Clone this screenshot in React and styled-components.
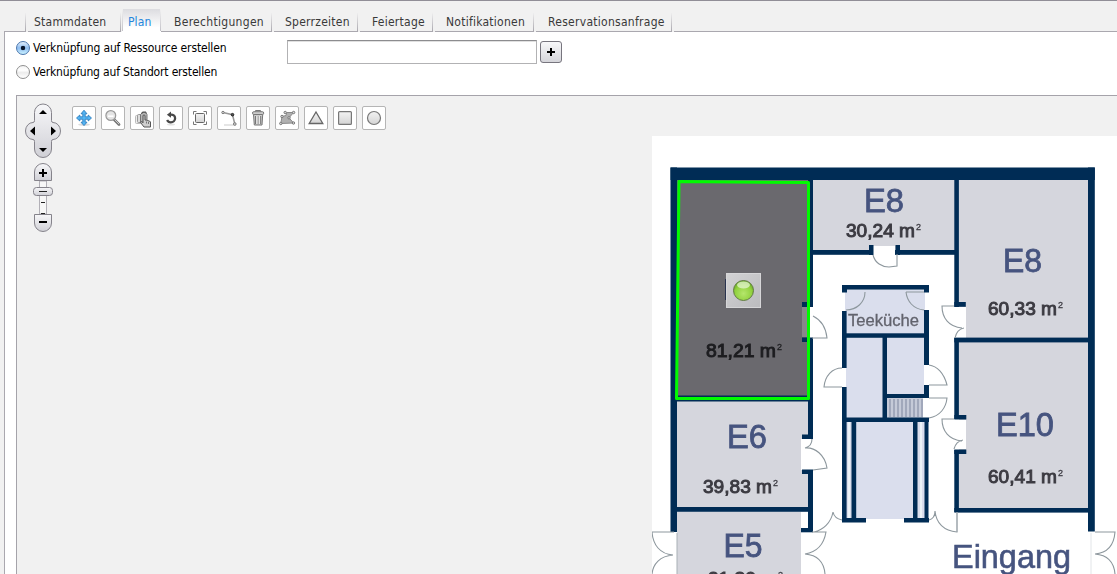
import React from "react";
import styled, { createGlobalStyle } from "styled-components";

const Global = createGlobalStyle`
  * { box-sizing: border-box; }
  html, body { margin: 0; height: 100%; overflow: hidden; background: #f1f1f1; }
  body { font-family: "DejaVu Sans Condensed", "DejaVu Sans", sans-serif; font-stretch: condensed; font-size: 12px; color: #000; }
`;

const Page = styled.div`
  width: 1117px;
  height: 574px;
  overflow: hidden;
  border-top: 1px solid #918e97;
  display: flex;
  flex-direction: column;
`;

const TabBar = styled.nav`
  display: flex;
  flex: none;
  gap: 2px;
  height: 31px;
  padding: 8px 0 0 4px;
`;

const TabEdge = styled.div`
  width: ${(p) => (p.$grow ? "auto" : "22px")};
  flex: ${(p) => (p.$grow ? 1 : "none")};
  border-bottom: 1px solid #aaa8af;
  background: ${(p) => (p.$grow ? "none" : "linear-gradient(#f1f1f1 15%, #aaa8af) right / 1px 100% no-repeat")};
`;

const Tab = styled.button`
  flex: none;
  width: ${(p) => p.$width}px;
  height: 23px;
  margin: 0 ${(p) => (p.$active ? "-2px" : 0)} 0 ${(p) => (p.$active ? "-1px" : 0)};
  padding: 3px 0 0 ${(p) => p.$pad}px;
  border: 0;
  border-bottom: 1px solid ${(p) => (p.$active ? "#fff" : "#aaa8af")};
  background: ${(p) =>
    p.$active
      ? "linear-gradient(#f1f1f1, #c4c3c9) left / 1px 100% no-repeat, linear-gradient(#f1f1f1, #c4c3c9) right / 1px 100% no-repeat, linear-gradient(#dcdce0, #fff 85%)"
      : "linear-gradient(#f1f1f1 15%, #aaa8af) right / 1px 100% no-repeat"};
  color: ${(p) => (p.$active ? "#2486dc" : "#393939")};
  font: inherit;
  line-height: 20px;
  letter-spacing: ${(p) => p.$track}px;
  text-align: left;
  white-space: nowrap;
`;

const Panel = styled.main`
  flex: 1;
  min-height: 0;
  margin-left: 4px;
  border-left: 1px solid #aaa8af;
  background: #fff;
  display: flex;
  flex-direction: column;
`;

const LinkForm = styled.div`
  display: flex;
  flex: none;
  height: 63px;
  padding: 8px 0 0 11px;
`;

const Choices = styled.div`
  width: 271px;
  display: flex;
  flex-direction: column;
  gap: 8px;
`;

const Choice = styled.label`
  display: flex;
  align-items: center;
  gap: 3px;
  height: 16px;
  white-space: nowrap;
  letter-spacing: ${(p) => p.$track}px;
`;

const Radio = styled.span`
  width: 14px;
  height: 14px;
  flex: none;
  border-radius: 50%;
  border: 1px solid ${(p) => (p.$on ? "#4a76ad" : "#8f8f8f")};
  background: ${(p) =>
    p.$on
      ? "radial-gradient(circle, #08152c 0 1.9px, transparent 2.6px), linear-gradient(#e2eefb, #8fbdf0 50%, #c9f1ff)"
      : "linear-gradient(#f4f4f4, #fff 35%, #ececec 55%, #fff)"};
`;

const Input = styled.input`
  width: 250px;
  height: 24px;
  border: 1px solid #b2b2b4;
  border-top-color: #8c8c8f;
  box-shadow: inset 0 1px 0 #e0e0e0;
  background: #fff;
  outline: 0;
`;

const AddButton = styled.button`
  width: 22px;
  height: 22px;
  margin: 1px 0 0 3px;
  padding: 0;
  border: 1px solid #77757e;
  border-radius: 3px;
  background: linear-gradient(#f8f8fa, #d5d5da);
  display: grid;
  place-items: center;
`;

const MapArea = styled.section`
  flex: 1;
  min-height: 0;
  margin-left: 11px;
  border-top: 1px solid #a5a3aa;
  border-left: 1px solid #a5a3aa;
  background: #f1f1f1;
  display: flex;
`;

const Navigation = styled.div`
  width: 55px;
  flex: none;
  padding: 7px 0 0 7px;
`;

const Tools = styled.div`
  width: 580px;
  flex: none;
  padding-top: 10px;
  display: flex;
  align-items: flex-start;
  gap: 5px;
`;

const Tool = styled.button`
  width: 24px;
  height: 24px;
  padding: 0;
  border: 1px solid #b5b5b5;
  border-radius: 2px;
  background: #fff;
  display: grid;
  place-items: center;
`;

const Plan = styled.div`
  flex: none;
  width: 465px;
  height: 438px;
  margin-top: 40px;
  background: #fff;
`;

const Drawing = styled.svg`
  display: block;
  overflow: hidden;
  font-family: "Liberation Sans", Arial, sans-serif;
`;

const tabs = [
  { label: "Stammdaten", width: 93, pad: 6, track: 0.25 },
  { label: "Plan", width: 39, pad: 6, track: 0.1, active: true },
  { label: "Berechtigungen", width: 111, pad: 13, track: 0.3 },
  { label: "Sperrzeiten", width: 84, pad: 11, track: 0.25 },
  { label: "Feiertage", width: 73, pad: 12, track: 0.25 },
  { label: "Notifikationen", width: 99, pad: 11, track: 0.25 },
  { label: "Reservationsanfrage", width: 136, pad: 12, track: 0.28 },
];

const node = { fill: "#ddd", stroke: "#777", strokeWidth: 1 };

const icons = {
  move: (
    <>
      <ellipse cx="11" cy="17.6" rx="6" ry="1.3" fill="#ddd" />
      <path d="M11 3.2l3 3.6h-1.8v3h3V8l3.3 3-3.3 3v-1.8h-3v3H14l-3 3.4-3-3.4h1.8v-3h-3V14l-3.3-3 3.3-3v1.8h3v-3H8z" fill="#54b5f3" stroke="#2274b8" strokeWidth=".8" />
    </>
  ),
  zoom: (
    <>
      <path d="M11.8 12.2l5.2 5.2" stroke="#777" strokeWidth="2.8" strokeLinecap="round" />
      <path d="M12.5 12.5l4.6 4.6" stroke="#ccc" strokeWidth="1" />
      <circle cx="8.8" cy="8.5" r="4.9" fill="#e4e4e4" stroke="#999" strokeWidth="1.2" />
      <path d="M6 9.200h5.500" fill="none" stroke="#fff" strokeWidth="1.6" />
    </>
  ),
  hand: (
    <>
      <rect x="4.500" y="8.500" width="6" height="8" rx="1" fill="#eee" stroke="#bbb" />
      <rect x="6.500" y="7.500" width="6" height="8" rx="1" fill="#ddd" stroke="#999" />
      <path d="M9.500 7.500l2-2h3l1.500 2v7.500h-6.500z" fill="#b8b8b8" stroke="#777" />
      <path d="M10.500 6.500l1.500-1.500h2.500l1 1.500" fill="none" stroke="#555" strokeWidth="1.200" />
      <path d="M12 9c0-1.600 2-1.600 2 0v4l1.300.1 1.400.5 1.400.4 1.400.8v5.200h-6.500l-3.300-4.300c0-1.400 1.200-1.300 2.300.2z" fill="#cfcfcf" stroke="#555" />
      <path d="M15.500 14.500v2M17.500 15v2" stroke="#777" />
    </>
  ),
  undo: (
    <>
      <ellipse cx="11" cy="17.5" rx="4" ry="1" fill="#e2e2e2" />
      <path d="M10.2 7.7c3-.5 4.9 1.300 4.900 3.500 0 2.500-2 4.100-4.300 4.100-1.800 0-3-.8-3.700-2.200" fill="none" stroke="#484848" strokeWidth="2.300" />
      <path d="M11 4.600v6.200L6.900 7.800z" fill="#484848" />
    </>
  ),
  frame: (
    <>
      <rect x="6.5" y="6.5" width="9" height="9" rx="1" fill="url(#shade)" stroke="#666" />
      <path d="M4.5 7.5v-3h3M14.5 4.5h3v3M17.5 14.5v3h-3M7.5 17.5h-3v-3" fill="none" stroke="#777" />
    </>
  ),
  line: (
    <>
      <path d="M6 18h12" stroke="#e5e5e5" strokeWidth="2" />
      <path d="M5 5.5l9.5 2.2L16.8 17" fill="none" stroke="#999" strokeWidth="1.5" />
      <circle cx="5" cy="5.5" r="1.2" {...node} />
      <circle cx="14.5" cy="7.7" r="1.3" fill="#555" stroke="#222" />
      <circle cx="16.8" cy="17" r="1.3" {...node} />
    </>
  ),
  trash: (
    <>
      <path d="M6.5 7.5h9.2L15 18H7.3z" fill="#ccc" stroke="#777" />
      <path d="M8.5 9v8M11 9v8M13.7 9v8" stroke="#777" />
      <path d="M10 9v8M12.3 9v8" stroke="#eee" />
      <path d="M8.5 4.5v-1h5v1" fill="none" stroke="#777" />
      <rect x="5.5" y="4.7" width="11.2" height="2.8" rx="1.3" fill="#ccc" stroke="#777" />
    </>
  ),
  polygon: (
    <>
      <path d="M4.800 16.500L6 9.500l4-1 .8-3h6.800L13 10.800l4.600 5.200z" fill="#b0b0b0" stroke="#8a8a8a" />
      <circle cx="4.8" cy="16.5" r="1.2" {...node} />
      <circle cx="6" cy="9.5" r="1.2" {...node} />
      <circle cx="9.2" cy="5.5" r="1.2" {...node} />
      <circle cx="17.6" cy="5.5" r="1.2" {...node} />
      <circle cx="13" cy="10.8" r="1.2" {...node} />
      <circle cx="17.5" cy="16" r="1.2" {...node} />
    </>
  ),
  triangle: <path d="M11 5l6.8 11.5H4.2z" fill="url(#shade)" stroke="#666" strokeWidth="1.3" />,
  square: <rect x="4.6" y="4.6" width="12.8" height="12.8" rx="1" fill="url(#shade)" stroke="#777" strokeWidth="1.2" />,
  circle: <circle cx="11" cy="11" r="6.5" fill="url(#shade)" stroke="#777" strokeWidth="1.2" />,
};

function Controls() {
  return (
    <svg width="38" height="130" viewBox="24 103 38 130" style={{ display: "block" }}>
      <defs>
        <linearGradient id="metal" x1="0" y1="0" x2="0" y2="1">
          <stop offset="0" stopColor="#f7f7f9" />
          <stop offset="1" stopColor="#d0d0d6" />
        </linearGradient>
        <linearGradient id="shade" x1="0" y1="0" x2="0" y2="1">
          <stop offset="0" stopColor="#f3f3f3" />
          <stop offset="1" stopColor="#d4d4d4" />
        </linearGradient>
      </defs>
      <g fill="url(#metal)" stroke="#85838b">
        <path d="M34.5 112.5a8.5 8.5 0 0 1 17 0v8q0 2 1.500 2a7.500 8.500 0 0 1 0 17q-1.500 0-1.500 2v7.500a8.500 8.500 0 0 1-17 0v-7.500q0-2-1.500-2a7.500 8.500 0 0 1 0-17q1.500 0 1.500-2z" />
        <path d="M39.500 181h7v33h-7z" fill="#f7f7f7" stroke="#b2b0b7" />
        <path d="M34.500 172a8.500 8.500 0 0 1 17 0v8.500h-17z" />
        <path d="M34.500 214.500h17v8.500a8.500 8.500 0 0 1-17 0z" />
        <rect x="33.500" y="187.500" width="19" height="8" rx="3" />
      </g>
      <path d="M43 110l4 4h-8zM43 152l4-4h-8zM30 131l5-4.500v9zM56 131l-5-4.500v9z" fill="#000" />
      <path d="M39 173h8M43 169v8M39 222h8" stroke="#000" strokeWidth="2" />
      <path d="M39 191.500h8M41 202.500h4M41 213.500h4" stroke="#222" />
    </svg>
  );
}

const rooms = [
  [677, 180, 132, 217, "#6a696e"],
  [802, 307, 7, 30, "#88878b"],
  [677, 401, 131, 107, "#d5d6dd"],
  [677, 512, 124, 62, "#d5d6dd"],
  [813, 180, 142, 70, "#d5d6dd"],
  [959, 180, 129, 158, "#d5d6dd"],
  [959, 342, 129, 167, "#d5d6dd"],
  [845, 290, 80, 44, "#dadeed"],
  [846, 338, 37, 80, "#dadeed"],
  [887, 338, 37, 57, "#dadeed"],
  [887, 398, 36, 20, "#c5cad8"],
  [846, 422, 79, 97, "#dadeed"],
];

const openings = [
  [801, 439, 8, 31],
  [801, 512, 8, 16],
  [873, 246, 22, 10],
  [954, 307, 12, 31],
  [954, 420, 12, 29],
  [841, 368, 5, 19],
  [925, 365, 5, 20],
  [857, 519, 56, 5],
];

const walls = [
  [670.500, 167.500, 424.300, 12.500],
  [670.500, 167.500, 6.500, 364.500],
  [1088, 167.500, 6.800, 364],
  [808, 180, 5, 127], [802, 302, 11, 5],
  [802, 337.500, 11, 4.500], [808, 338, 5, 101],
  [802, 434.500, 11, 4.500], [802, 469.500, 11, 4.500], [808, 470, 5, 62], [801, 528, 12, 4.300],
  [674, 395.500, 136, 6], [674, 507, 136, 4.800],
  [813, 250, 60, 4.800], [869, 245, 4.500, 10], [895, 250, 61, 4.800], [895.500, 245, 4.500, 10],
  [954.300, 180, 4.600, 127], [954.300, 302, 11.500, 4.800],
  [954.300, 337.600, 134, 4.800], [954.300, 338, 4.600, 81], [954.300, 415, 12, 4.500],
  [954.300, 449.500, 12, 4.500], [954.300, 450, 4.600, 62], [954.300, 508, 134, 4.600],
  [842, 285, 87, 4.600], [842, 285, 5, 7.500], [924, 285, 5, 7.500],
  [842, 311, 4.600, 57], [842, 387, 4.600, 135], [845, 333.300, 84, 4.500],
  [924, 310, 5, 55], [924, 385, 5, 13], [885, 394, 44, 4], [882.500, 337, 4.500, 82],
  [842, 417.500, 87, 4.500], [851.500, 420, 4.700, 100], [913, 420, 4.500, 100],
  [924.500, 420, 4, 100], [842, 518, 24, 4.500], [904, 518, 25, 4.500],
];

const doors = [
  "M813 316c8 4 13 12 14 22h-15", "M805 448c10-1 20 7 22 20l-14 2", "M805 448c4-1 7-4 7-9",
  "M873 255c2 8 9 12 16 12l8-1v-12", "M954 306h-12c0 12 7 21 20 22",
  "M964 328c-5 1-8 5-9 10", "M954 419h-12c0 12 7 21 20 22", "M963 440c-5 1-8 5-9 9",
  "M842 368c-10 0-17 8-18 19h18", "M929 365c8 1 15 8 18 20h-18",
  "M929 398h18c-1 10-7 18-18 20", "M929 398h18",
  "M846 310c11 0 19-8 19-18M906 292c1 9 7 17 18 18M906 292h18",
  "M652 532h22M652 532c1 13 8 22 21 23-13 1-20 9-21 19",
  "M812 532h14c-2 12-9 20-21 22 12 1 19 8 20 20",
  "M814 532c9-2 17-9 19-20 1 5 4 7 9 8",
  "M929 520c4-1 6-3 6-9 1 12 9 20 22 21v-20",
  "M1095 532h20c-1 13-8 21-20 22 12 1 19 8 20 20",
];

const names = [
  ["E8", 864, 212, 40, 33], ["E8", 1003, 271.500, 39, 33], ["E6", 727, 448, 40, 33],
  ["E10", 996, 436, 58, 33], ["E5", 723.500, 557, 39, 33],
];
const sizes = [
  ["30,24 m", 846, 236.500, 69, "#3c3b42"], ["60,33 m", 988, 314.500, 69, "#3c3b42"],
  ["81,21 m", 706, 356.500, 70, "#1d1d20"], ["39,83 m", 703, 492.800, 69, "#3c3b42"],
  ["60,41 m", 988, 482.500, 69, "#3c3b42"], ["31,80 m", 708, 584.500, 69, "#3c3b42"],
];

function FloorPlan() {
  return (
    <Drawing width="465" height="438" viewBox="652 136 465 438">
      <defs>
        <filter id="soften" filterUnits="userSpaceOnUse" x="652" y="136" width="465" height="438" colorInterpolationFilters="sRGB"><feGaussianBlur stdDeviation=".65" /></filter>
        <radialGradient id="lamp" cx=".5" cy=".65" r=".6">
          <stop offset="0" stopColor="#b5e66c" /><stop offset=".7" stopColor="#91d13e" /><stop offset="1" stopColor="#6bab27" />
        </radialGradient>
        <linearGradient id="tile" x1="0" y1="0" x2="1" y2="1">
          <stop offset="0" stopColor="#d2d2d4" /><stop offset="1" stopColor="#bbbbbe" />
        </linearGradient>
      </defs>
      <g filter="url(#soften)">
        <rect x="642" y="126" width="485" height="458" fill="#fff" />
        {rooms.map(([x, y, w, h, fill], i) => <rect key={i} x={x} y={y} width={w} height={h} fill={fill} />)}
        {openings.map(([x, y, w, h], i) => <rect key={i} x={x} y={y} width={w} height={h} fill="#fff" />)}
        <path d="M890 399v18M894 399v18M898 399v18M902 399v18M906 399v18M910 399v18M914 399v18M918 399v18M922 399v18" stroke="#8e96ac" strokeWidth="1.300" />
        <path d="M849 422v96M921 422v96" stroke="#edf3f8" strokeWidth="2" />
        {walls.map(([x, y, w, h], i) => <rect key={i} x={x} y={y} width={w} height={h} fill="#002c55" />)}
        <path d={doors.join("")} fill="none" stroke="#8d979d" strokeWidth="1.100" />
        <path d="M677 533v41M957 512v20" stroke="#a9b0b6" />
        <path d="M1091 533v41" stroke="#e2e5e8" />
        {names.map(([t, x, y, w, s]) => (
          <text key={x} x={x} y={y} fontSize={s} textLength={w} lengthAdjust="spacingAndGlyphs" fill="#46547f" stroke="#46547f" strokeWidth=".800">{t}</text>
        ))}
        <text x="952" y="567.500" fontSize="33" textLength="119" lengthAdjust="spacingAndGlyphs" fill="#46547f" stroke="#46547f" strokeWidth=".600">Eingang</text>
        <text x="848" y="326" fontSize="16" textLength="71" lengthAdjust="spacingAndGlyphs" fill="#62636d" stroke="#62636d" strokeWidth=".300">Teeküche</text>
        {sizes.map(([t, x, y, w, c]) => (
          <g key={t} fill={c} stroke={c}>
            <text x={x} y={y} fontSize="19" textLength={w} lengthAdjust="spacingAndGlyphs" strokeWidth="1">{t}</text>
            <text x={x + w + 1} y={y - 7} fontSize="9" strokeWidth=".300">2</text>
          </g>
        ))}
      </g>
      <path d="M679 181.500L808.500 182.500V398.500H676.500z" fill="none" stroke="#00fb00" strokeWidth="3" strokeLinejoin="round" />
      <path d="M725.500 279v21" stroke="#29334f" />
      <rect x="726.500" y="273.500" width="34" height="34" fill="url(#tile)" stroke="#d6d6d8" />
      <circle cx="743.500" cy="290.500" r="10" fill="url(#lamp)" stroke="#637b45" />
      <ellipse cx="743.500" cy="285" rx="6.500" ry="3.500" fill="#e6f6d1" opacity=".75" />
    </Drawing>
  );
}

export default function App() {
  return (
    <Page>
      <Global />
      <TabBar>
        <TabEdge />
        {tabs.map((t) => (
          <Tab key={t.label} $width={t.width} $pad={t.pad} $track={t.track} $active={t.active}>{t.label}</Tab>
        ))}
        <TabEdge $grow />
      </TabBar>
      <Panel>
        <LinkForm>
          <Choices>
            <Choice $track={-0.14}><Radio $on />Verknüpfung auf Ressource erstellen</Choice>
            <Choice $track={-0.17}><Radio />Verknüpfung auf Standort erstellen</Choice>
          </Choices>
          <Input aria-label="Ressource" />
          <AddButton aria-label="Hinzufügen">
            <svg width="8" height="8" viewBox="0 0 8 8"><path d="M0 4h8M4 0v8" stroke="#000" strokeWidth="2" /></svg>
          </AddButton>
        </LinkForm>
        <MapArea>
          <Navigation><Controls /></Navigation>
          <Tools>
            {Object.entries(icons).map(([name, art]) => (
              <Tool key={name} aria-label={name}>
                <svg width="22" height="22" viewBox="0 0 22 22">{art}</svg>
              </Tool>
            ))}
          </Tools>
          <Plan><FloorPlan /></Plan>
        </MapArea>
      </Panel>
    </Page>
  );
}
